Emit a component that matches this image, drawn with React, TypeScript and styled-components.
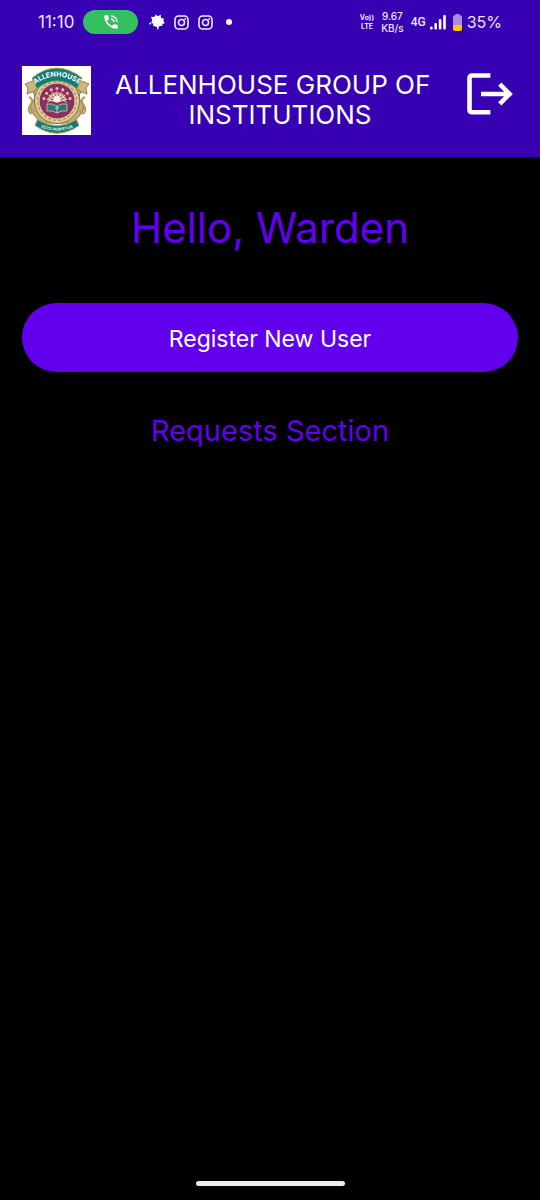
import React from "react";
import styled, { createGlobalStyle } from "styled-components";

const GlobalStyle = createGlobalStyle`
  *, *::before, *::after { box-sizing: border-box; }
  html, body, #root { min-height: 100%; }
  body {
    margin: 0;
    background: #000;
    font-family: Inter, Roboto, sans-serif;
  }
`;

const Screen = styled.div`
  min-height: 100vh;
  display: flex;
  flex-direction: column;
  background: #000;
`;

const Header = styled.header`
  background: #3700b3;
  color: #fff;
`;

const StatusBar = styled.div`
  height: 44px;
  padding: 0 38px;
  display: flex;
  align-items: center;
  justify-content: space-between;
  color: #ede4ff;
`;

const StatusGroup = styled.div<{ $gap: number }>`
  display: flex;
  align-items: center;
  gap: ${({ $gap }) => $gap}px;
`;

const StatusText = styled.span<{ $size: number }>`
  font-size: ${({ $size }) => $size}px;
  line-height: 20px;
`;

const NetworkText = styled.span`
  font: 500 12px/20px Roboto, sans-serif;
`;

const CallPill = styled.span`
  width: 55px;
  height: 24px;
  margin-right: 2px;
  border-radius: 12px;
  background: #34c05e;
  display: flex;
  align-items: center;
  justify-content: center;
`;

const Dot = styled.span`
  width: 6px;
  height: 6px;
  margin-left: 4px;
  border-radius: 50%;
  background: #fff;
`;

const Stacked = styled.span<{ $size: number; $line: number; $weight: number }>`
  display: flex;
  flex-direction: column;
  align-items: center;
  font-size: ${({ $size }) => $size}px;
  line-height: ${({ $line }) => $line}px;
  font-weight: ${({ $weight }) => $weight};
`;

const AppBar = styled.div`
  padding: 22px 19px 22px 22px;
  display: flex;
  align-items: center;
`;

const Title = styled.h1`
  flex: 1;
  margin: 0;
  padding: 0 12px 2px 22px;
  font-size: 26px;
  line-height: 30px;
  font-weight: 400;
  text-align: center;
`;

const LogoutButton = styled.button`
  width: 62px;
  height: 56px;
  margin-bottom: 13px;
  padding: 0;
  border: 0;
  background: none;
  color: #fff;
  display: flex;
  align-items: center;
  justify-content: center;
  cursor: pointer;
`;

const Main = styled.main`
  flex: 1;
  padding: 43px 22px;
  display: flex;
  flex-direction: column;
  align-items: center;
  color: #6200ee;
`;

const Greeting = styled.h2`
  margin: 0 0 47px;
  font-size: 42px;
  line-height: 56px;
  font-weight: 400;
`;

const PrimaryButton = styled.button`
  width: 100%;
  height: 69px;
  padding: 2px 0 0;
  border: 0;
  border-radius: 35px;
  background: #6200ee;
  color: #fff;
  font: 400 23px/32px Inter, Roboto, sans-serif;
  cursor: pointer;
`;

const SectionTitle = styled.h3`
  margin: 40px 0 0;
  font-size: 29px;
  line-height: 38px;
  font-weight: 400;
`;

const NavBar = styled.footer`
  padding-bottom: 14px;
  display: flex;
  justify-content: center;
`;

const HomeHandle = styled.span`
  width: 149px;
  height: 5px;
  border-radius: 3px;
  background: #ececec;
`;

const CallIcon = () => (
  <svg width="18" height="18" viewBox="0 0 24 24" fill="#fff" aria-hidden="true">
    <path d="M20 15.5c-1.25 0-2.45-.2-3.57-.57a1 1 0 0 0-1.02.24l-2.2 2.2a15.05 15.05 0 0 1-6.59-6.59l2.2-2.21a.96.96 0 0 0 .25-1A11.36 11.36 0 0 1 8.5 4c0-.55-.45-1-1-1H4c-.55 0-1 .45-1 1 0 9.39 7.61 17 17 17 .55 0 1-.45 1-1v-3.5c0-.55-.45-1-1-1zM19 12h2a9 9 0 0 0-9-9v2c3.87 0 7 3.13 7 7zm-4 0h2c0-2.76-2.24-5-5-5v2c1.66 0 3 1.34 3 3z" />
  </svg>
);

const LeafIcon = () => (
  <svg width="16" height="16" viewBox="0 0 16 16" fill="#fff" aria-hidden="true">
    <path d="M2 2.8 5.2 3 7 .6 8.6 2.2 11.8.8 12 4l3 .4-.6 2.2 1.4 2.6-2.6.9.5 1.7-3 .2-1 1-.3 1.6H8.2l-.2-1.6-1.9-.6-2.3-.9.6-1.4L2.2 8.6l1-2.4z" />
    <circle cx="1.2" cy="9.4" r="1" />
    <circle cx="8.8" cy="14.8" r="0.8" />
  </svg>
);

const InstagramIcon = () => (
  <svg width="15" height="15" viewBox="0 0 15 15" fill="none" stroke="#f3edff" aria-hidden="true">
    <rect x="1" y="1" width="13" height="13" rx="3.6" strokeWidth="1.6" />
    <circle cx="7.5" cy="7.5" r="3" strokeWidth="1.5" />
    <circle cx="11.2" cy="3.9" r="0.9" fill="#f3edff" stroke="none" />
  </svg>
);

const SignalIcon = () => (
  <svg width="16" height="15" viewBox="0 0 16 15" fill="#fff" aria-hidden="true">
    <rect x="0" y="11.5" width="2.6" height="3" rx="1" />
    <rect x="4.4" y="8" width="2.6" height="6.5" rx="1" />
    <rect x="8.8" y="4" width="2.6" height="10.5" rx="1" />
    <rect x="13.2" y="0" width="2.6" height="14.5" rx="1" />
  </svg>
);

const BatteryIcon = () => (
  <svg width="9" height="17" viewBox="0 0 9 17" aria-hidden="true">
    <path d="M2.4 0h4.2v1.2H7.2Q9 1.4 9 3.2V11H0V3.2Q0 1.4 1.8 1.2h.6z" fill="#ad8be0" />
    <path d="M0 11h9v4q0 2-2 2H2q-2 0-2-2z" fill="#fdc70c" />
  </svg>
);

const LogoutIcon = () => (
  <svg width="46" height="42" viewBox="0 0 46 42" fill="none" stroke="currentColor" strokeWidth="4.6" aria-hidden="true">
    <path d="M23.4 2.5H5.3Q2.5 2.5 2.5 5.3v31.2q0 2.8 2.8 2.8h18.1" />
    <path d="M14 21h29M32.8 11.2 42.6 21l-9.8 9.8" />
  </svg>
);

const rays = [-75, -50, -25, 0, 25, 50, 75];
const studs = Array.from({ length: 24 }, (_, i) => i * 15);

const CrestLogo = () => (
  <svg width="69" height="69" viewBox="0 0 69 69" role="img" aria-label="Allenhouse crest">
    <defs>
      <path id="crest-top" d="M10 20.5Q34.5.5 60 20.5" />
      <path id="crest-bottom" d="M17 60.5Q35 69 53 60.5" />
    </defs>
    <rect width="69" height="69" fill="#fff" />
    <path d="M3 18 13 14l6 11-9 1-5 2 1-6z" fill="#cdb57c" stroke="#846b35" strokeWidth=".8" />
    <path d="m67 18-10-4-6 11 9 1 5 2-1-6z" fill="#cdb57c" stroke="#846b35" strokeWidth=".8" />
    <path d="M11 26Q15 31 10 37q-4 6 2 12l7 8h32l7-8q6-6 2-12-5-6-1-11l-9-9H20z" fill="#c5ab70" stroke="#8f783f" />
    <path d="M7 31q5 2 2 7-4 5-1 9 3 1 4-3M63 31q-5 2-2 7 4 5 1 9-3 1-4-3" fill="none" stroke="#b69858" strokeWidth="2" />
    <circle cx="35" cy="35" r="22.5" fill="#dfcd9c" stroke="#8a713c" />
    <circle cx="35" cy="35" r="20" fill="#b3975c" />
    {studs.map((a) => (
      <circle key={a} cx="35" cy="15.8" r=".8" fill="#f6ebc7" transform={`rotate(${a} 35 35)`} />
    ))}
    <circle cx="35" cy="35" r="18" fill="#88305f" stroke="#eee0bd" />
    <g stroke="#f3dcb5" strokeWidth="1.3" strokeLinecap="round">
      {rays.map((a) => (
        <g key={a} transform={`rotate(${a} 35 36)`}>
          <path d="M35 35V26" />
          <circle cx="35" cy="22.5" r=".9" fill="#f5b7a0" stroke="#f5b7a0" />
          <path d="m32.5 27 2.5 2.5 2.5-2.5" fill="none" strokeWidth=".8" />
        </g>
      ))}
    </g>
    <circle cx="35" cy="33" r="3.5" fill="#fff0d8" />
    <path d="M25 38q5-1 10 2 5-3 10-2v7q-5-1-10 2-5-3-10-2z" fill="#2a7779" stroke="#d9c896" strokeWidth=".8" />
    <path d="M35 40v7M33 42h4" stroke="#dceae0" strokeWidth=".8" />
    <path d="M10 12Q34.5-8 60 12l-5 11Q34.5 7 15 23z" fill="#127a78" stroke="#bda35e" />
    <path d="M15.5 53.5Q35 66 54.5 53.5l2.5 6Q35 75 13 59.5z" fill="#127a78" stroke="#bda35e" />
    <text fill="#fff" fontFamily="Inter, sans-serif" fontSize="7" fontWeight="700" textAnchor="middle">
      <textPath href="#crest-top" startOffset="50%">ALLENHOUSE</textPath>
    </text>
    <text fill="#e3efdb" fontFamily="Inter, sans-serif" fontSize="4" fontWeight="700" textAnchor="middle">
      <textPath href="#crest-bottom" startOffset="50%">ESTO PERPETUA</textPath>
    </text>
  </svg>
);

export default function App() {
  return (
    <Screen>
      <GlobalStyle />
      <Header>
        <StatusBar>
          <StatusGroup $gap={9}>
            <StatusText $size={17}>11:10</StatusText>
            <CallPill><CallIcon /></CallPill>
            <LeafIcon />
            <InstagramIcon />
            <InstagramIcon />
            <Dot />
          </StatusGroup>
          <StatusGroup $gap={7}>
            <Stacked $size={7} $line={9} $weight={700}>
              <span>Vo))</span>
              <span>LTE</span>
            </Stacked>
            <Stacked $size={10} $line={12} $weight={500}>
              <span>9.67</span>
              <span>KB/s</span>
            </Stacked>
            <StatusGroup $gap={4}>
              <NetworkText>4G</NetworkText>
              <SignalIcon />
            </StatusGroup>
            <StatusGroup $gap={5}>
              <BatteryIcon />
              <StatusText $size={16}>35%</StatusText>
            </StatusGroup>
          </StatusGroup>
        </StatusBar>
        <AppBar>
          <CrestLogo />
          <Title>
            {"ALLENHOUSE GROUP OF\u00a0\u00a0"}
            <br />
            INSTITUTIONS
          </Title>
          <LogoutButton type="button" aria-label="Log out">
            <LogoutIcon />
          </LogoutButton>
        </AppBar>
      </Header>
      <Main>
        <Greeting>Hello, Warden</Greeting>
        <PrimaryButton type="button">Register New User</PrimaryButton>
        <SectionTitle>Requests Section</SectionTitle>
      </Main>
      <NavBar>
        <HomeHandle />
      </NavBar>
    </Screen>
  );
}
